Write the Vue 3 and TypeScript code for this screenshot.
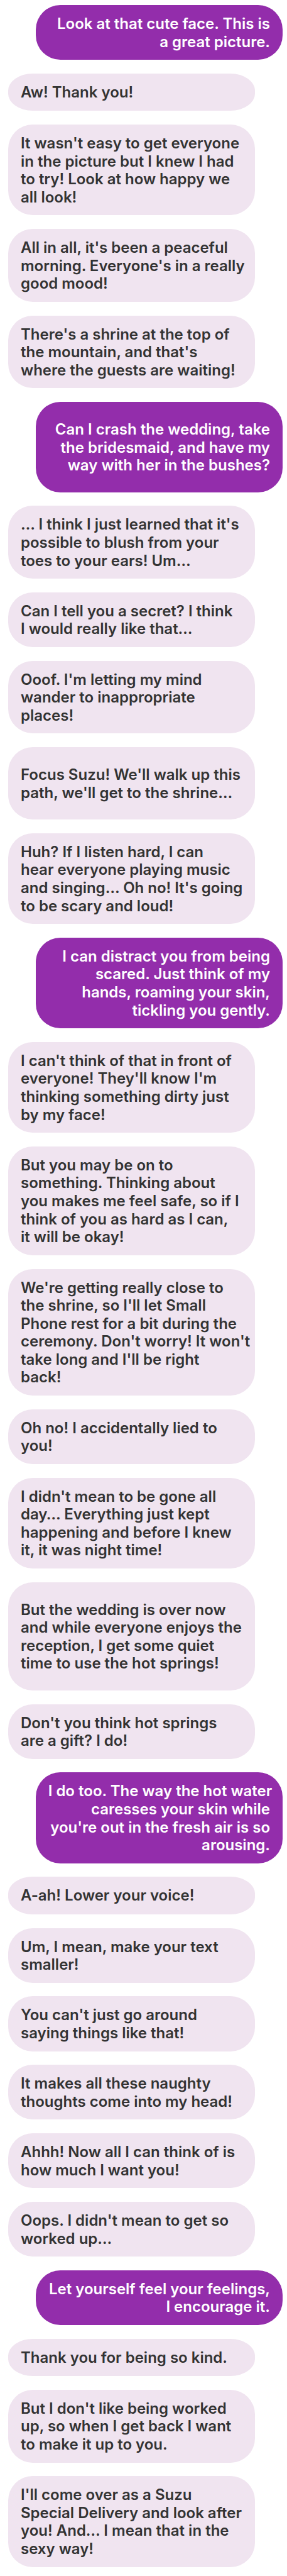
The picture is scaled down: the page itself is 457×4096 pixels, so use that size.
<script setup lang="ts">
interface Message {
  text: string
  own?: boolean
  roomy?: boolean
}

const messages: Message[] = [
  { own: true, text: 'Look at that cute face. This is\na great picture.' },
  { text: 'Aw! Thank you!' },
  { text: "It wasn't easy to get everyone\nin the picture but I knew I had\nto try! Look at how happy we\nall look!" },
  { text: "All in all, it's been a peaceful\nmorning. Everyone's in a really\ngood mood!" },
  { text: "There's a shrine at the top of\nthe mountain, and that's\nwhere the guests are waiting!" },
  { own: true, roomy: true, text: 'Can I crash the wedding, take\nthe bridesmaid, and have my\nway with her in the bushes?' },
  { text: "… I think I just learned that it's\npossible to blush from your\ntoes to your ears! Um…" },
  { text: 'Can I tell you a secret? I think\nI would really like that…' },
  { text: "Ooof. I'm letting my mind\nwander to inappropriate\nplaces!" },
  { roomy: true, text: "Focus Suzu! We'll walk up this\npath, we'll get to the shrine…" },
  { text: "Huh? If I listen hard, I can\nhear everyone playing music\nand singing… Oh no! It's going\nto be scary and loud!" },
  { own: true, text: 'I can distract you from being\nscared. Just think of my\nhands, roaming your skin,\ntickling you gently.' },
  { text: "I can't think of that in front of\neveryone! They'll know I'm\nthinking something dirty just\nby my face!" },
  { text: 'But you may be on to\nsomething. Thinking about\nyou makes me feel safe, so if I\nthink of you as hard as I can,\nit will be okay!' },
  { text: "We're getting really close to\nthe shrine, so I'll let Small\nPhone rest for a bit during the\nceremony. Don't worry! It won't\ntake long and I'll be right\nback!" },
  { text: 'Oh no! I accidentally lied to\nyou!' },
  { text: "I didn't mean to be gone all\nday… Everything just kept\nhappening and before I knew\nit, it was night time!" },
  { roomy: true, text: 'But the wedding is over now\nand while everyone enjoys the\nreception, I get some quiet\ntime to use the hot springs!' },
  { text: "Don't you think hot springs\nare a gift? I do!" },
  { own: true, text: "I do too. The way the hot water\ncaresses your skin while\nyou're out in the fresh air is so\narousing." },
  { text: 'A-ah! Lower your voice!' },
  { text: 'Um, I mean, make your text\nsmaller!' },
  { text: "You can't just go around\nsaying things like that!" },
  { text: 'It makes all these naughty\nthoughts come into my head!' },
  { text: 'Ahhh! Now all I can think of is\nhow much I want you!' },
  { text: "Oops. I didn't mean to get so\nworked up…" },
  { own: true, text: 'Let yourself feel your feelings,\nI encourage it.' },
  { text: 'Thank you for being so kind.' },
  { text: "But I don't like being worked\nup, so when I get back I want\nto make it up to you." },
  { text: "I'll come over as a Suzu\nSpecial Delivery and look after\nyou! And… I mean that in the\nsexy way!" },
]

const isSingle = (message: Message): boolean => !message.text.includes('\n')
</script>

<template>
  <main class="chat">
    <p
      v-for="(message, index) in messages"
      :key="index"
      class="bubble"
      :class="{ own: message.own, roomy: message.roomy, single: isSingle(message) }"
    >{{ message.text }}</p>
  </main>
</template>

<style>
body {
  margin: 0;
  background: #fff;
}
</style>

<style scoped>
.chat {
  box-sizing: border-box;
  display: flex;
  flex-direction: column;
  justify-content: space-between;
  gap: 21px;
  min-height: 100vh;
  padding: 8px 7px 14px 13px;
  font-family: Inter, "Liberation Sans", sans-serif;
  font-size: 24px;
  font-weight: 600;
  line-height: 1.192;
}

.bubble {
  box-sizing: border-box;
  align-self: flex-start;
  width: 90%;
  margin: 0;
  padding: 16px 20px 14px;
  border-radius: 39px;
  background: #f0e4f0;
  color: #333;
  white-space: pre;
}

.own {
  align-self: flex-end;
  background: #932dab;
  color: #fff;
  text-align: right;
}

.roomy {
  padding-top: 30px;
  padding-bottom: 28px;
}

.single {
  padding-bottom: 15px;
  border-radius: 39px / 27px;
}
</style>
